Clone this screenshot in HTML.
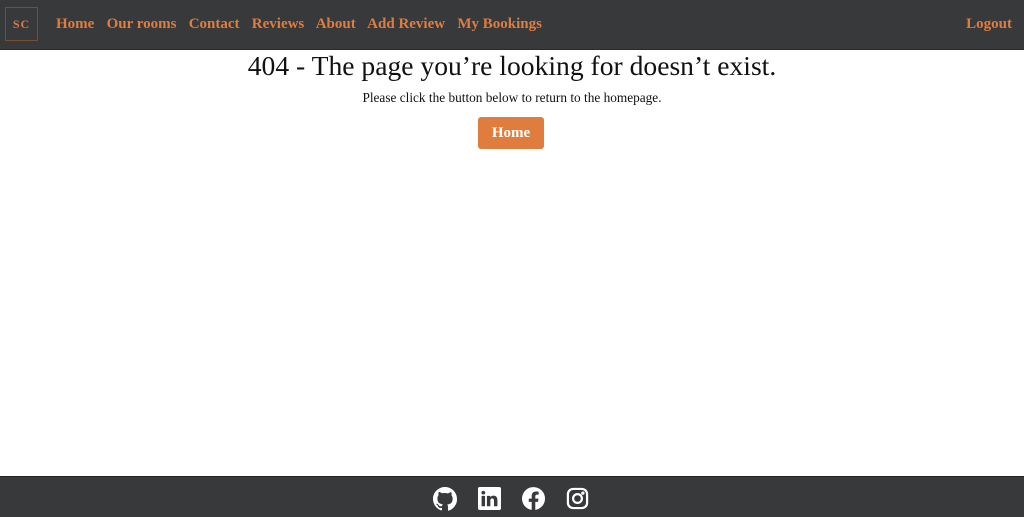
<!DOCTYPE html>
<html><head><meta charset="utf-8"><style>
body{margin:0;width:1024px;height:516px;position:relative;background:#fff;font-family:"Liberation Serif",serif;overflow:hidden}
nav{position:absolute;top:0;left:0;width:1024px;height:49px;background:#38393b;border-bottom:1px solid #2a2a2a}
.logo{position:absolute;left:5px;top:7px;width:31px;height:32px;border:1px solid #7a4e35;color:#d9794a;font-size:12px;font-weight:bold;text-align:center;line-height:33px;letter-spacing:1px}
.links{position:absolute;left:56px;top:16px;font-size:15px;font-weight:bold;color:#e07d3e}
.links span{margin-right:8.5px}
.logout{position:absolute;right:12px;top:16px;font-size:15px;font-weight:bold;color:#e07d3e}
h1{position:absolute;top:50px;left:0;width:1024px;text-align:center;margin:0;font-weight:normal;font-size:27.6px;color:#111}
p{position:absolute;top:90px;left:0;width:1024px;text-align:center;margin:0;font-size:13.3px;color:#111}
.btn{position:absolute;left:478px;top:117px;width:66px;height:32px;background:#e07d3e;border-radius:3px;color:#fff;font-weight:bold;font-size:15px;text-align:center;line-height:33px}
footer{position:absolute;top:476px;left:0;width:1024px;height:40px;background:#38393b;border-top:1px solid #222}
footer svg{position:absolute;top:10px}
</style></head><body>
<nav><div class="logo">SC</div>
<div class="links"><span>Home</span> <span>Our rooms</span> <span>Contact</span> <span>Reviews</span> <span>About</span> <span>Add Review</span> <span>My Bookings</span></div>
<div class="logout">Logout</div></nav>
<h1>404 - The page you’re looking for doesn’t exist.</h1>
<p>Please click the button below to return to the homepage.</p>
<div class="btn">Home</div>
<footer>
<svg style="left:433px" width="24" height="24" viewBox="0 0 16 16"><path fill="#fff" d="M8 0C3.58 0 0 3.58 0 8c0 3.54 2.29 6.530 5.47 7.59.4.07.55-.17.55-.38v-1.33c-2.23.49-2.690-1.07-2.690-1.07-.36-.92-.89-1.17-.89-1.17-.73-.5.06-.49.06-.49.8.06 1.23.83 1.23.83.71 1.22 1.87.87 2.33.66.07-.52.28-.87.51-1.07-1.78-.2-3.64-.89-3.64-3.95 0-.87.31-1.59.82-2.15-.08-.2-.36-1.02.08-2.12 0 0 .67-.21 2.2.82A7.7 7.7 0 0 1 8 4.04c.68 0 1.360.09 2 .27 1.53-1.04 2.2-.82 2.2-.82.44 1.1.16 1.92.08 2.12.51.56.82 1.27.82 2.15 0 3.07-1.87 3.75-3.65 3.95.29.25.54.73.54 1.48v2.2c0 .21.15.46.55.38A8 8 0 0 0 16 8c0-4.42-3.58-8-8-8z"/></svg>
<svg style="left:478px" width="23" height="23" viewBox="0 0 16 16"><path fill="#fff" d="M0 1.15C0 .52.52 0 1.17 0h13.66C15.48 0 16 .52 16 1.15v13.7c0 .63-.52 1.15-1.17 1.15H1.17C.52 16 0 15.48 0 14.85zM4.9 13.4V6.2H2.5v7.2zM3.7 5.2c.83 0 1.35-.55 1.35-1.24C5.03 3.25 4.53 2.7 3.71 2.7S2.35 3.25 2.35 3.96c0 .69.52 1.24 1.33 1.24zm4.9 8.2V9.4c0-.22.02-.43.08-.59.17-.43.57-.87 1.23-.87.870 0 1.21.66 1.21 1.62v3.84h2.4V9.27c0-2.22-1.18-3.25-2.76-3.25-1.27 0-1.84.7-2.16 1.2V6.2H6.2c.03.68 0 7.2 0 7.2z"/></svg>
<svg style="left:522px" width="23" height="23" viewBox="0 0 16 16"><path fill="#fff" d="M16 8.05A8 8 0 1 0 6.75 15.95v-5.6H4.72V8.05h2.03V6.29c0-2.01 1.19-3.12 3.020-3.12.88 0 1.8.16 1.8.16v1.97h-1.01c-1 0-1.31.62-1.31 1.26v1.5h2.22l-.35 2.3H9.25v5.6A8 8 0 0 0 16 8.05z"/></svg>
<svg style="left:566px" width="23" height="23" viewBox="0 0 24 24" fill="none" stroke="#fff" stroke-width="2.3"><rect x="2" y="2" width="20" height="20" rx="5.5"/><circle cx="12" cy="12" r="4.6"/><circle cx="17.6" cy="6.4" r=".6" fill="#fff"/></svg>
</footer>
</body></html>
